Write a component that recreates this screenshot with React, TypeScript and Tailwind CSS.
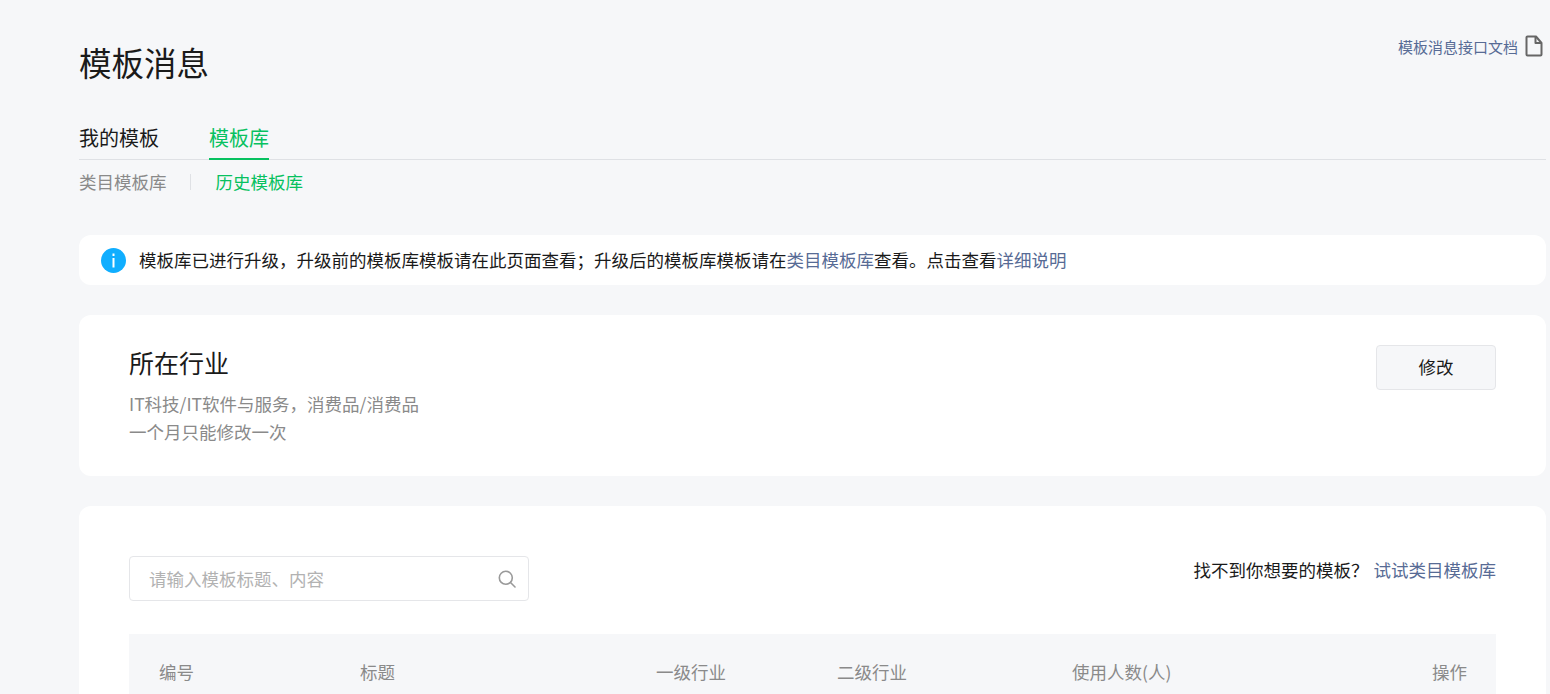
const font = "[font-family:'Noto_Sans_CJK_SC','Liberation_Sans',sans-serif]";

const FileIcon = () => (
  <svg width="18" height="22" viewBox="0 0 18 22" fill="none" stroke="#666" strokeWidth="2" strokeLinejoin="round">
    <path d="M1.500 2.500a1 1 0 0 1 1-1h8.500l5.500 6.500v11.500a1 1 0 0 1-1 1h-13a1 1 0 0 1-1-1z" />
    <path d="M10.500 1.500v6.500h6" />
  </svg>
);

const InfoIcon = () => (
  <svg width="25" height="25" viewBox="0 0 25 25" className="shrink-0">
    <circle cx="12.500" cy="12.500" r="12.500" fill="#10aeff" />
    <rect x="11.500" y="5.500" width="2" height="2.500" fill="#fff" />
    <rect x="11.500" y="10" width="2" height="9.500" fill="#fff" />
  </svg>
);

const SearchIcon = () => (
  <svg width="18" height="18" viewBox="0 0 18 18" fill="none" stroke="#9a9a9a" strokeWidth="1.600" strokeLinecap="round">
    <circle cx="7.800" cy="7.800" r="6.500" />
    <path d="M12.500 12.500 17 17" />
  </svg>
);

export default function App() {
  return (
    <div className={`${font} h-[694px] overflow-hidden bg-[#f6f7f9] pl-[79px] pr-1 text-[#1a1a1a]`}>
      <div className="flex items-start justify-between pt-[37px]">
        <h1 className="text-[32.500px] leading-[50px] font-normal">模板消息</h1>
        <a className="mr-[3px] flex items-start gap-[7px] text-[15px] leading-5 text-[#576b95]">
          <span className="-ml-px">模板消息接口文档</span> <span className="-mt-[2px]"><FileIcon /></span>
        </a>
      </div>

      <div className="mt-[17px] flex h-[56px] gap-[50px] border-b border-[#dfe1e5] text-[20px]">
        <div className="pt-[20px] leading-7">我的模板</div>
        <div className="h-[56px] border-b-2 border-[#07c160] pt-[20px] leading-7 text-[#07c160]">模板库</div>
      </div>

      <div className="mt-[9px] flex h-[26px] items-center text-[17.500px] leading-[26px]">
        <span className="text-[#8a8a8a]">类目模板库</span>
        <span className="mx-[23px] h-4 w-px bg-[#dfe1e5]" />
        <span className="ml-[2px] text-[#07c160]">历史模板库</span>
      </div>

      <div className="mt-[40px] flex h-[50px] items-center gap-[13px] rounded-xl bg-white pl-[22px] text-[17.500px]">
        <InfoIcon />
        <p>
          模板库已进行升级，升级前的模板库模板请在此页面查看；升级后的模板库模板请在
          <span className="text-[#576b95]">类目模板库</span>
          查看。点击查看
          <span className="text-[#576b95]">详细说明</span>
        </p>
      </div>

      <div className="mt-[30px] flex h-[161px] items-start justify-between rounded-xl bg-white pt-[30px] pr-[50px] pl-[50px]">
        <div className="-mt-px">
          <h2 className="text-[25px] leading-9 font-normal">所在行业</h2>
          <p className="mt-[10px] text-[17.500px] leading-7 text-[#8a8a8a]">IT科技/IT软件与服务，消费品/消费品</p>
          <p className="text-[17.500px] leading-7 text-[#8a8a8a]">一个月只能修改一次</p>
        </div>
        <button className="h-[45px] w-[120px] rounded border border-[#e5e6e9] bg-[#f6f7f9] text-[17.500px]">修改</button>
      </div>

      <div className="mt-[30px] rounded-xl bg-white px-[50px] pt-[50px] pb-10">
        <div className="flex items-start justify-between">
          <div className="flex h-[45px] w-[400px] items-center justify-between rounded border border-[#e5e6e9] pr-[12px] pl-[19px] text-[17.500px] text-[#b2b2b2]">
            <span className="mt-[2px]">请输入模板标题、内容</span>
            <SearchIcon />
          </div>
          <div className="text-[17.500px] leading-7">
            找不到你想要的模板？<span className="ml-[5px] text-[#576b95]">试试类目模板库</span>
          </div>
        </div>

        <div className="mt-[33px] flex h-[76px] items-center bg-[#f6f7f9] pr-[29px] pl-[30px] text-[17.500px] text-[#8a8a8a]">
          <span className="w-[201px]">编号</span>
          <span className="w-[296px]">标题</span>
          <span className="w-[181px]">一级行业</span>
          <span className="w-[235px]">二级行业</span>
          <span className="flex-1">使用人数(人)</span>
          <span>操作</span>
        </div>
      </div>
    </div>
  );
}
